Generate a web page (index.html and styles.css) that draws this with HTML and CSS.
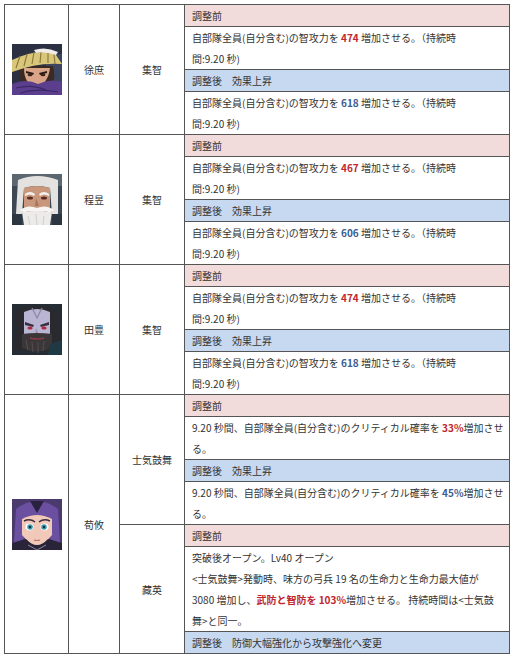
FILE: index.html
```html
<!DOCTYPE html>
<html lang="ja">
<head>
<meta charset="utf-8">
<link rel="stylesheet" href="styles.css">
</head>
<body>
<table class="tbl">
  <colgroup>
    <col class="c-icon"><col class="c-name"><col class="c-skill"><col class="c-desc">
  </colgroup>
  <tbody>
    <!-- 徐庶 -->
    <tr>
      <td class="icon" rowspan="4">
        <svg class="face" viewBox="0 0 50 51" width="50" height="51">
          <rect width="50" height="51" fill="#2b3142"/>
          <rect x="34" y="10" width="16" height="41" fill="#3d4660"/>
          <path d="M8 22 Q6 34 12 44 L40 44 Q44 32 41 22 Z" fill="#3a2a22"/>
          <path d="M12 24 Q12 40 24 44 Q36 40 38 24 Z" fill="#d9a487"/>
          <path d="M14 27 L22 29 L21 31 L14 29 Z" fill="#2a1a14"/>
          <path d="M27 29 L35 27 L35 29 L28 31 Z" fill="#2a1a14"/>
          <ellipse cx="18" cy="31" rx="2.4" ry="1.3" fill="#3a2418"/>
          <ellipse cx="31" cy="31" rx="2.4" ry="1.3" fill="#3a2418"/>
          <path d="M0 16 Q20 6 42 8 L50 20 Q26 18 0 28 Z" fill="#d8c77a"/>
          <path d="M4 24 L8 12 M12 22 L15 10 M20 20 L22 8 M28 19 L29 8 M36 19 L36 9 M43 20 L42 10" stroke="#8f7a3a" stroke-width="1.2"/>
          <path d="M22 6 Q34 2 46 8 L44 11 Q32 7 24 9 Z" fill="#f0ecea"/>
          <path d="M0 40 Q14 34 26 40 Q38 34 50 38 L50 51 L0 51 Z" fill="#5b3f8e"/>
          <path d="M4 44 Q20 40 34 46 M8 49 Q24 44 46 48" stroke="#3c2866" stroke-width="1.2" fill="none"/>
        </svg>
      </td>
      <td class="name" rowspan="4">徐庶</td>
      <td class="skill" rowspan="4">集智</td>
      <td class="hdr pre">調整前</td>
    </tr>
    <tr><td class="txt">自部隊全員(自分含む)の智攻力を <b class="up">474</b> 増加させる。（持続時<br>間:9.20 秒)</td></tr>
    <tr><td class="hdr post">調整後　効果上昇</td></tr>
    <tr><td class="txt">自部隊全員(自分含む)の智攻力を <b class="new">618</b> 増加させる。（持続時<br>間:9.20 秒)</td></tr>

    <!-- 程昱 -->
    <tr>
      <td class="icon" rowspan="4">
        <svg class="face" viewBox="0 0 50 51" width="50" height="51">
          <rect width="50" height="51" fill="#3c4955"/>
          <path d="M0 0 L50 0 L50 12 L0 12 Z" fill="#5a6670"/>
          <path d="M6 6 Q25 -2 46 6 L46 40 L40 40 L38 14 Q25 10 12 14 L10 40 L4 40 Z" fill="#e4e2e0"/>
          <path d="M12 14 Q25 10 38 14 L38 36 Q25 44 12 36 Z" fill="#c9977c"/>
          <path d="M13 20 Q18 16 23 20 L22 22 Q18 19 13 22 Z" fill="#f4f2f0"/>
          <path d="M27 20 Q32 16 37 20 L37 22 Q32 19 28 22 Z" fill="#f4f2f0"/>
          <ellipse cx="18" cy="24" rx="3" ry="1.5" fill="#5a2a22"/>
          <ellipse cx="32" cy="24" rx="3" ry="1.5" fill="#5a2a22"/>
          <path d="M24 24 L23 32 L27 32 Z" fill="#a8765e"/>
          <path d="M8 36 Q16 30 25 34 Q34 30 42 36 Q38 40 34 37 Q25 38 16 37 Q12 40 8 36 Z" fill="#f6f5f4"/>
          <path d="M10 38 Q25 36 40 38 L38 51 L12 51 Z" fill="#ecebea"/>
          <path d="M16 42 L18 51 M24 40 L25 51 M32 42 L31 51" stroke="#c8c8c8" stroke-width="0.8"/>
          <rect x="0" y="40" width="10" height="11" fill="#2c3640"/>
          <rect x="40" y="40" width="10" height="11" fill="#2c3640"/>
        </svg>
      </td>
      <td class="name" rowspan="4">程昱</td>
      <td class="skill" rowspan="4">集智</td>
      <td class="hdr pre">調整前</td>
    </tr>
    <tr><td class="txt">自部隊全員(自分含む)の智攻力を <b class="up">467</b> 増加させる。（持続時<br>間:9.20 秒)</td></tr>
    <tr><td class="hdr post">調整後　効果上昇</td></tr>
    <tr><td class="txt">自部隊全員(自分含む)の智攻力を <b class="new">606</b> 増加させる。（持続時<br>間:9.20 秒)</td></tr>

    <!-- 田豊 -->
    <tr>
      <td class="icon" rowspan="4">
        <svg class="face" viewBox="0 0 50 51" width="50" height="51">
          <rect width="50" height="51" fill="#252c33"/>
          <path d="M4 8 Q25 -4 46 8 L48 46 L2 46 Z" fill="#2a292e"/>
          <path d="M12 8 Q25 2 38 8 L38 34 Q25 40 12 34 Z" fill="#b9b5d2"/>
          <path d="M20 4 L25 14 L30 4" stroke="#8a86a4" stroke-width="1.2" fill="none"/>
          <path d="M13 18 L22 21 L21 23 L13 21 Z" fill="#3a3040"/>
          <path d="M28 21 L37 18 L37 21 L29 23 Z" fill="#3a3040"/>
          <ellipse cx="18" cy="24" rx="2.6" ry="1.5" fill="#b0283a"/>
          <ellipse cx="32" cy="24" rx="2.6" ry="1.5" fill="#b0283a"/>
          <path d="M24 24 L23 31 L27 31 Z" fill="#9a96b4"/>
          <path d="M10 30 Q25 28 40 30 L40 44 Q25 51 10 44 Z" fill="#3b3638"/>
          <path d="M18 34 Q25 36 32 34" stroke="#8a3a48" stroke-width="1.5" fill="none"/>
          <path d="M14 36 L16 46 M20 38 L21 48 M26 38 L26 49 M32 37 L31 47" stroke="#5a5458" stroke-width="0.8"/>
          <path d="M38 40 L50 36 L50 51 L36 51 Z" fill="#1f3a44"/>
        </svg>
      </td>
      <td class="name" rowspan="4">田豊</td>
      <td class="skill" rowspan="4">集智</td>
      <td class="hdr pre">調整前</td>
    </tr>
    <tr><td class="txt">自部隊全員(自分含む)の智攻力を <b class="up">474</b> 増加させる。（持続時<br>間:9.20 秒)</td></tr>
    <tr><td class="hdr post">調整後　効果上昇</td></tr>
    <tr><td class="txt">自部隊全員(自分含む)の智攻力を <b class="new">618</b> 増加させる。（持続時<br>間:9.20 秒)</td></tr>

    <!-- 荀攸 -->
    <tr>
      <td class="icon" rowspan="7">
        <svg class="face" viewBox="0 0 50 51" width="50" height="51">
          <rect width="50" height="51" fill="#3a2c55"/>
          <path d="M0 0 L50 0 L50 51 L0 51 Z" fill="#4a3a6e"/>
          <path d="M4 10 Q25 -6 46 10 L48 44 L38 40 L40 20 Q25 12 10 20 L12 40 L2 44 Z" fill="#6b4fa0"/>
          <path d="M18 2 L25 14 L32 2 Z" fill="#2a2040"/>
          <path d="M10 20 Q25 12 40 20 L40 36 Q30 48 25 48 Q20 48 10 36 Z" fill="#f1c9b8"/>
          <path d="M12 22 Q18 19 23 23" stroke="#3a2a40" stroke-width="1.6" fill="none"/>
          <path d="M27 23 Q32 19 38 22" stroke="#3a2a40" stroke-width="1.6" fill="none"/>
          <ellipse cx="17.5" cy="28" rx="4" ry="3.4" fill="#ffffff"/>
          <ellipse cx="32.5" cy="28" rx="4" ry="3.4" fill="#ffffff"/>
          <circle cx="18" cy="28" r="2.8" fill="#3a9ab0"/>
          <circle cx="32" cy="28" r="2.8" fill="#3a9ab0"/>
          <circle cx="18" cy="28" r="1.2" fill="#10303a"/>
          <circle cx="32" cy="28" r="1.2" fill="#10303a"/>
          <path d="M22 41 Q25 42 28 41" stroke="#c0706a" stroke-width="1.2" fill="none"/>
          <path d="M0 44 L14 40 Q25 52 36 40 L50 44 L50 51 L0 51 Z" fill="#2a2438"/>
          <path d="M16 46 L25 51 L34 46" stroke="#8a8aa0" stroke-width="1" fill="none"/>
        </svg>
      </td>
      <td class="name" rowspan="7">荀攸</td>
      <td class="skill" rowspan="4">士気鼓舞</td>
      <td class="hdr pre">調整前</td>
    </tr>
    <tr><td class="txt">9.20 秒間、自部隊全員(自分含む)のクリティカル確率を <b class="up">33%</b>増加させ<br>る。</td></tr>
    <tr><td class="hdr post">調整後　効果上昇</td></tr>
    <tr><td class="txt">9.20 秒間、自部隊全員(自分含む)のクリティカル確率を <b class="new">45%</b>増加させ<br>る。</td></tr>
    <tr>
      <td class="skill" rowspan="3">藏英</td>
      <td class="hdr pre">調整前</td>
    </tr>
    <tr><td class="txt">突破後オープン。Lv40 オープン<br>&lt;士気鼓舞&gt;発動時、味方の弓兵 19 名の生命力と生命力最大値が<br>3080 増加し、<b class="up">武防と智防を 103%</b>増加させる。 持続時間は&lt;士気鼓<br>舞&gt;と同一。</td></tr>
    <tr><td class="hdr post">調整後　防御大幅強化から攻撃強化へ変更</td></tr>
  </tbody>
</table>
</body>
</html>
```

FILE: styles.css
```css
html, body {
  margin: 0;
  padding: 0;
  background: #ffffff;
}
body {
  padding: 4px 0 0 4px;
  font-family: "Noto Sans CJK JP", "Noto Sans", sans-serif;
  font-size: 10px;
  color: #333333;
}
.tbl {
  border-collapse: collapse;
  table-layout: fixed;
  width: 505px;
  background: #ffffff;
}
.c-icon { width: 64px; }
.c-name { width: 51px; }
.c-skill { width: 65px; }
.c-desc { width: 325px; }
.tbl td {
  border: 1px solid #555555;
  padding: 0 7px;
  line-height: 21px;
  vertical-align: middle;
  white-space: nowrap;
}
.tbl td.icon,
.tbl td.name,
.tbl td.skill {
  text-align: center;
  padding: 0;
}
.face {
  display: block;
  margin: 0 auto;
}
.hdr.pre { background: #f2dcdb; }
.hdr.post { background: #c6d9f0; }
.txt { background: #ffffff; }
b.up {
  color: #c0272d;
  font-weight: bold;
}
b.new {
  color: #3a5c94;
  font-weight: bold;
}
```
